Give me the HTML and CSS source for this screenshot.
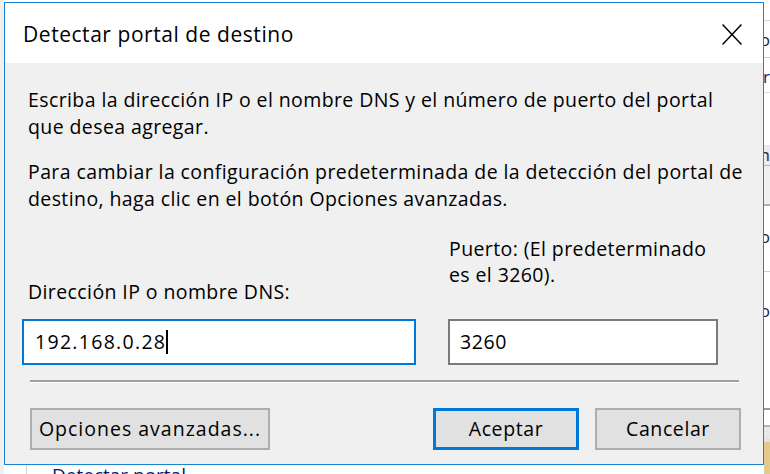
FILE: index.html
```html
<!DOCTYPE html>
<html lang="es">
<head>
<meta charset="utf-8">
<title>Detectar portal de destino</title>
<link rel="stylesheet" href="styles.css">
</head>
<body>
<div class="desktop">
  <div class="back-app">
    <div class="back-tree">
      <div class="back-spacer"></div>
      <div class="back-btn">Detectar portal...</div>
    </div>
    <div class="back-list">
      <div class="back-row r1"></div>
      <div class="back-row r2">Destino</div>
      <div class="back-row r3">Iniciador</div>
      <div class="back-row r4"></div>
      <div class="back-row r5">Dirección</div>
      <div class="back-row r6"></div>
      <div class="back-row r7">Puerto</div>
      <div class="back-row r8">Estado</div>
      <div class="back-row r9"></div>
      <div class="back-row r10"></div>
      <div class="back-row r11"></div>
    </div>
  </div>

  <div class="dialog">
    <div class="titlebar">
      <span class="title">Detectar portal de destino</span>
      <svg class="close" width="20" height="21" viewBox="0 0 20 21">
        <path d="M0.5 0.5 L19.5 20.5 M19.5 0.5 L0.5 20.5" stroke="#000" stroke-width="1.5" fill="none"/>
      </svg>
    </div>
    <div class="content">
      <p class="para p1">Escriba la dirección IP o el nombre DNS y el número de puerto del portal<br>que desea agregar.</p>
      <p class="para p2">Para cambiar la configuración predeterminada de la detección del portal de<br>destino, haga clic en el botón Opciones avanzadas.</p>
      <div class="fields">
        <label class="lbl lbl-ip">Dirección IP o nombre DNS:</label>
        <label class="lbl lbl-port">Puerto: (El predeterminado<br>es el 3260).</label>
        <div class="input input-ip"><span class="val">192.168.0.28</span><span class="caret"></span></div>
        <div class="input input-port"><span class="val">3260</span></div>
      </div>
      <div class="separator"></div>
      <div class="buttons">
        <button class="btn btn-adv">Opciones avanzadas...</button>
        <div class="btn-group">
          <button class="btn btn-default">Aceptar</button>
          <button class="btn">Cancelar</button>
        </div>
      </div>
    </div>
  </div>
</div>
</body>
</html>
```

FILE: styles.css
```css
* { box-sizing: border-box; }

html, body {
  margin: 0;
  padding: 0;
}

body {
  width: 770px;
  height: 474px;
  overflow: hidden;
  background: #ffffff;
  font-family: "Open Sans", "Noto Sans", sans-serif;
  color: #000;
}

.desktop {
  position: relative;
  width: 770px;
  height: 474px;
}

/* ---------- window behind the dialog ---------- */
.back-app {
  display: flex;
  width: 770px;
  height: 474px;
  background: #ffffff;
}

.back-tree {
  width: 764px;
  flex: 0 0 764px;
  display: flex;
  flex-direction: column;
  border-left: 4px solid #f0f0f0;
}

.back-spacer {
  flex: 1;
}

.back-btn {
  height: 10px;
  padding-left: 48px;
  font-size: 19px;
  line-height: 22px;
  color: #0c1a5e;
  overflow: hidden;
  position: relative;
  white-space: nowrap;
}

.back-btn::before {
  content: "";
  position: absolute;
  left: 22px;
  top: 0;
  bottom: 0;
  width: 1px;
  background: #d0d0d0;
}

.back-list {
  flex: 1 1 0;
  min-width: 0;
  display: flex;
  flex-direction: column;
  font-size: 17px;
  color: #000;
}

.back-row {
  border-bottom: 1px solid #cfcfcf;
  white-space: nowrap;
  overflow: hidden;
  direction: rtl;
  line-height: 18px;
  padding-top: 10px;
  color: #1a1a40;
}

.r1 { height: 21px; padding-top: 0; border-bottom-color: #d5d5d5; }
.r2 { height: 37px; }
.r3 { height: 35px; border-bottom-color: #e0e0e0; }
.r4 { height: 53px; border-bottom-color: #e6e6e6; }
.r5 { height: 20px; padding-top: 0; background: #ececec; border-bottom-color: #b5b5b5; }
.r6 { height: 40px; border-bottom: 2px solid #b0b0b0; background: #f0f0f0; }
.r7 { height: 66px; padding-top: 22px; }
.r8 { height: 138px; padding-top: 30px; border-bottom: 2px solid #9a9a9a; }
.r9 { height: 17px; border-bottom: 2px solid #b5b5b5; }
.r10 { height: 12px; border: 0; background: #e8e8e8; }
.r11 { flex: 1; border: 0; background: linear-gradient(#e0e0e0 0, #e0e0e0 3px, #e3c98a 3px, #e3c98a 100%); }

/* ---------- dialog ---------- */
.dialog {
  position: absolute;
  left: 4px;
  top: 2px;
  width: 760px;
  height: 463px;
  border: 1px solid #1883d7;
  background: #f0f0f0;
  display: flex;
  flex-direction: column;
}

.titlebar {
  height: 60px;
  flex: 0 0 60px;
  background: #ffffff;
  display: flex;
  align-items: center;
  justify-content: space-between;
  padding-left: 18px;
  padding-right: 21px;
}

.title {
  font-size: 21px;
  letter-spacing: 0.55px;
  line-height: 26px;
  margin-top: 1px;
}

.close {
  display: block;
  width: 20px;
  height: 21px;
  margin-top: 2px;
}

.content {
  flex: 1;
  padding: 24px 22px 0 17px;
  font-size: 19.5px;
  letter-spacing: 0.4px;
  display: flex;
  flex-direction: column;
}

.para {
  margin: 0;
  padding-left: 6px;
  line-height: 26.5px;
  white-space: nowrap;
}

.p2 { margin-top: 19px; }

.fields {
  display: grid;
  grid-template-columns: 394px 270px;
  column-gap: 32px;
  margin-top: 24px;
}

.lbl {
  line-height: 26px;
  display: block;
  white-space: nowrap;
}

.lbl-ip {
  grid-column: 1;
  grid-row: 1;
  padding-left: 6px;
  margin-top: 43px;
}

.lbl-port {
  grid-column: 2;
  grid-row: 1;
  padding-left: 1px;
}

.input {
  grid-row: 2;
  margin-top: 14px;
  height: 46px;
  background: #ffffff;
  display: flex;
  align-items: center;
  line-height: 24px;
}

.input-ip {
  grid-column: 1;
  border: 2px solid #0078d7;
  padding-left: 11px;
  letter-spacing: 1.3px;
}

.input-port {
  grid-column: 2;
  border: 2px solid #7a7a7a;
  padding-left: 10px;
  letter-spacing: 0.6px;
}

.caret {
  display: inline-block;
  width: 2px;
  height: 24px;
  background: #000;
  margin-left: 0;
}

.separator {
  margin: 15px 2px 0 8px;
  height: 3px;
  border-top: 2px solid #a0a0a0;
  border-bottom: 1px solid #ffffff;
}

.buttons {
  display: flex;
  justify-content: space-between;
  margin-top: 25px;
  padding-left: 8px;
}

.btn-group {
  display: flex;
  gap: 16px;
}

.btn {
  font-family: inherit;
  font-size: 19.5px;
  letter-spacing: 0.6px;
  color: #000;
  height: 42px;
  width: 146px;
  background: #e1e1e1;
  border: 2px solid #adadad;
  padding: 0;
  margin: 0;
  line-height: 24px;
}

.btn-adv {
  width: 240px;
  letter-spacing: 1px;
}

.btn-default {
  border: 3px solid #0078d7;
}
```
